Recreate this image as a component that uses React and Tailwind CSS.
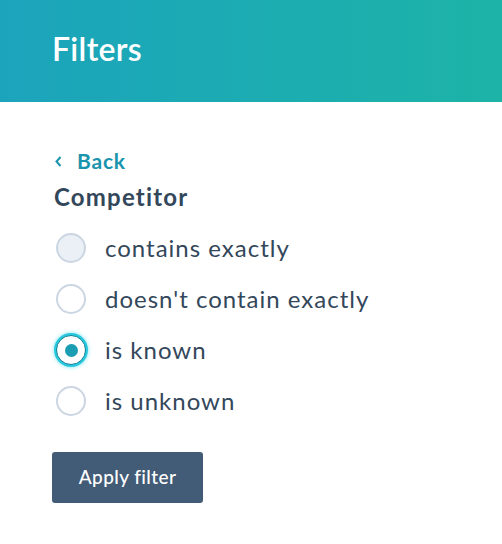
import { useState } from "react";

const options = [
    "contains exactly",
    "doesn't contain exactly",
    "is known",
    "is unknown",
];

function Radio({ state }) {
    if (state === "checked") {
        return (
            <span className="w-[30px] h-[30px] rounded-full border-[1.5px] border-[#0d7f94] bg-white flex items-center justify-center shadow-[0_0_0_2px_#27c9de,0_0_4px_2px_#7ee3ef]">
                <span className="w-[13px] h-[13px] rounded-full bg-[#1a9db2]" />
            </span>
        );
    }
    return (
        <span
            className={
                state === "hover"
                    ? "w-[30px] h-[30px] rounded-full border-2 border-[#cbd6e2] bg-[#eaf0f6]"
                    : "w-[30px] h-[30px] rounded-full border-2 border-[#cbd6e2] bg-white"
            }
        />
    );
}

export default function App() {
    const [selected, setSelected] = useState(2);

    return (
        <div className="w-[502px] h-[544px] bg-white font-['Lato',sans-serif]">
            <div className="h-[102px] bg-gradient-to-r from-[#1ca4bc] to-[#1db3a7] flex items-center px-[52px] pb-[4px]">
                <h1 className="text-white text-[32px] font-semibold tracking-[0.3px]">
                    Filters
                </h1>
            </div>

            <div className="px-[54px] pt-[46px]">
                <button className="flex items-center gap-[15px] text-[#1a93ad] text-[21px] font-bold leading-[26px]">
                    <svg width="7" height="11" viewBox="0 0 7 11" className="ml-[1px]">
                        <path d="M5.5 1 L1.5 5.5 L5.5 10" fill="none" stroke="#1a93ad" strokeWidth="2" />
                    </svg>
                    <span className="tracking-[0.8px]">Back</span>
                </button>
                <h2 className="mt-[8px] text-[#33475b] text-[24px] font-bold leading-[30px] tracking-[1.2px]">
                    Competitor
                </h2>

                <div className="mt-[21px] ml-[2px] flex flex-col gap-[21px]">
                    {options.map((opt, i) => (
                        <label
                            key={opt}
                            className="flex items-center gap-[19px] h-[30px] cursor-pointer"
                            onClick={() => setSelected(i)}
                        >
                            <Radio
                                state={
                                    i === selected
                                        ? "checked"
                                        : i === 0
                                        ? "hover"
                                        : "idle"
                                }
                            />
                            <span className="text-[#33475b] text-[24px] tracking-[1px]">
                                {opt}
                            </span>
                        </label>
                    ))}
                </div>

                <button className="mt-[36px] -ml-[2px] w-[151px] h-[51px] rounded-[3px] bg-[#425b76] text-white text-[19px] font-medium tracking-[0.4px]">
                    Apply filter
                </button>
            </div>
        </div>
    );
}
